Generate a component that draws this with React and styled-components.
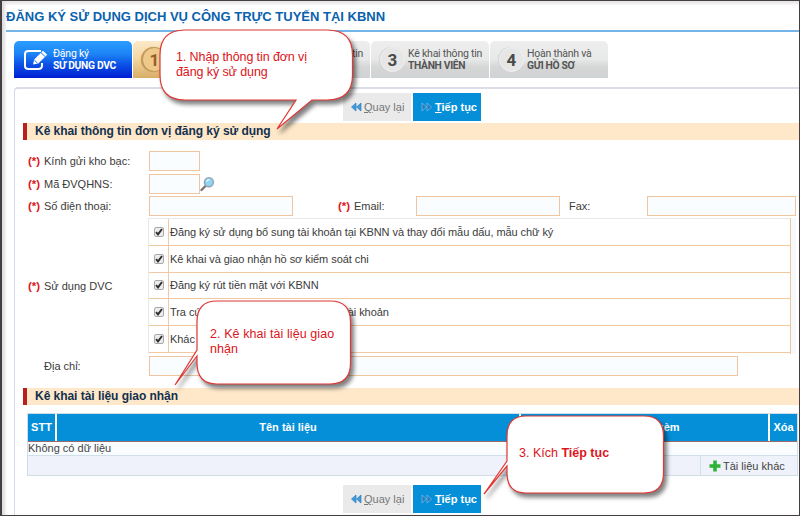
import React from 'react';
import styled, { createGlobalStyle } from 'styled-components';

const Global = createGlobalStyle`
  * { box-sizing: border-box; }
  body { margin: 0; background: #fff; font-family: "Liberation Sans", Arial, sans-serif; }
`;

const Frame = styled.div`
  position: relative;
  width: 800px;
  height: 516px;
  overflow: hidden;
  background: #fff;
  border: solid #453f42;
  border-width: 1px 1px 1px 2px;
  padding-left: 4px;
  box-shadow: inset 4px 0 3px -1px #dedede, inset 0 4px 3px -1px #e8e8e8;
`;
const Title = styled.h1`
  margin: 0;
  height: 31px;
  padding-top: 7px;
  border-bottom: 2px solid #74b4e6;
  color: #0a62ad;
  font-size: 13px;
  line-height: 17px;
  white-space: nowrap;
`;
const Tabs = styled.nav`
  display: flex;
  gap: 1px;
  padding: 9px 0 9px 8px;
  height: 55px;
`;
const tones = {
  active: ['#2b9dff 0%, #1c84f5 35%, #0b4fe6 65%, #001fd2 100%', '#fff'],
  warm: ['#fbe9c8 0%, #f4d8a2 45%, #d9ad66 100%', '#8a5a2c'],
  idle: ['#eeeeee 0%, #e7e8e8 50%, #d6d6d6 70%, #cfd3d4 100%', '#555'],
};
const Tab = styled.div`
  display: flex;
  align-items: center;
  width: 118px;
  height: 37px;
  padding-left: 9px;
  border-radius: 5px 5px 0 0;
  color: ${p => tones[p.$tone][1]};
  background: linear-gradient(${p => tones[p.$tone][0]});
`;
const StepNumber = styled.span`
  width: 25px;
  height: 25px;
  margin-right: 3px;
  border-radius: 50%;
  background: ${p => (p.$warm ? '#edc98c' : '#e6e6e6')};
  border: 1px solid ${p => (p.$warm ? '#c79d5c' : '#f1f1f1')};
  box-shadow: -1px 0 1px ${p => (p.$warm ? '#b98a48' : '#d2d2d2')};
  color: ${p => (p.$warm ? '#96602b' : '#4a4a4a')};
  font: 700 17px/24px Roboto, sans-serif;
  text-align: center;
`;
const TabText = styled.span`
  display: flex;
  flex-direction: column;
  margin-left: ${p => p.$ml || 0}px;
  font: 400 10.5px/11.5px Roboto, sans-serif;
  letter-spacing: -0.22px;
  white-space: nowrap;
  strong { font-weight: 700; font-size: 10.3px; letter-spacing: -0.33px; }
`;
const Panel = styled.main`
  margin-left: 8px;
  height: 440px;
  border: 1px solid #cfdcea;
  border-top: 2px solid #dadde8;
  border-right: 0;
  border-radius: 4px 0 0 0;
  padding-left: 8px;
`;
const Actions = styled.div`
  display: flex;
  gap: 2px;
  padding-left: 320px;
  height: 28px;
  margin-top: ${p => p.$mt}px;
`;
const Button = styled.button`
  display: flex;
  align-items: center;
  width: 68px;
  padding: 0 0 0 8px;
  gap: ${p => (p.$primary ? 3 : 2)}px;
  border: 0;
  font-family: inherit;
  font-size: 11px;
  font-weight: ${p => (p.$primary ? 700 : 400)};
  color: ${p => (p.$primary ? '#fff' : '#777')};
  background: ${p => (p.$primary ? '#058fd8' : '#eaeaea')};
  white-space: nowrap;
  svg { flex: none; }
`;
const Section = styled.h2`
  margin: ${p => p.$mt}px 0 0;
  height: 17px;
  padding-left: 8px;
  border-left: 4px solid #b8201f;
  background: #fee8c9;
  color: #12304f;
  font-size: 12px;
  line-height: 16px;
  letter-spacing: -0.04px;
  white-space: nowrap;
`;
const Form = styled.div`
  display: flex;
  flex-direction: column;
  padding: 11px 0 0 5px;
  color: #3b3b3b;
  font-size: 11px;
`;
const Row = styled.div`
  display: flex;
  align-items: center;
  height: ${p => p.$h || 20}px;
  margin-bottom: ${p => p.$mb}px;
`;
const Mark = styled.b`
  width: 16px;
  color: #e0151c;
  font-size: 11.5px;
`;
const Label = styled.label`
  width: ${p => p.$w}px;
  padding-bottom: 1px;
  white-space: nowrap;
`;
const Input = styled.input`
  width: ${p => p.$w}px;
  height: 20px;
  margin: 0 ${p => p.$mr || 0}px 0 0;
  padding: 0 3px;
  border: 1px solid #efc5a0;
  outline: 0;
  background: #fafdff;
`;
const Options = styled.div`
  width: 643px;
  height: 136px;
  border-top: 1px solid #e8e8e8;
  border-left: 1px solid #e8e8e8;
  border-right: 1px solid #efc59c;
  box-shadow: 5px 0 0 #f6f9fc;
`;
const Option = styled.div`
  display: flex;
  align-items: center;
  height: 26.8px;
  border-bottom: 1px solid #f0c8a2;
  white-space: nowrap;
  letter-spacing: -0.06px;
`;
const CheckCell = styled.span`
  display: flex;
  align-items: center;
  justify-content: center;
  width: 20px;
  height: 100%;
  margin-right: 1px;
  border-right: 1px solid #f0c8a2;
`;
const Check = styled.span`
  display: flex;
  width: 10px;
  height: 10px;
  border: 1px solid #a9a9a9;
  border-radius: 2px;
  background: #ececec;
`;
const Tail = styled.span`
  margin-left: ${p => p.$ml}px;
`;
const Table = styled.div`
  width: 771px;
  margin: 8px 0 0 4px;
  border: 1px solid #cfdfea;
  font-size: 11px;
  color: #444;
`;
const HeadRow = styled.div`
  display: grid;
  grid-template-columns: 27px 462px 1fr 27px;
  gap: 2px;
  height: 28px;
  background: #fff;
  border-bottom: 1px solid #9a6a6a;
`;
const HeadCell = styled.div`
  background: #058fd8;
  color: #fff;
  font-weight: 700;
  line-height: 27px;
  text-align: center;
  white-space: nowrap;
`;
const EmptyRow = styled.div`
  height: 14px;
  line-height: 13px;
  background: #f9fdff;
  border-bottom: 1px solid #cfe0ea;
`;
const FootRow = styled.div`
  display: flex;
  justify-content: flex-end;
  height: 19px;
  background: #eff2fa;
`;
const AddCell = styled.div`
  display: flex;
  align-items: center;
  gap: 2px;
  width: 97px;
  padding-left: 8px;
  border-left: 1px solid #cfe0ea;
  white-space: nowrap;
`;
const Callout = styled.aside`
  position: absolute;
  left: ${p => p.$x - 2}px;
  top: ${p => p.$y - 1}px;
  color: #dc1420;
  font-size: 12.5px;
  line-height: 14.5px;
  white-space: nowrap;
`;
const Bubble = styled.svg`
  display: block;
  overflow: visible;
  filter: drop-shadow(3px 4px 2px rgba(0, 0, 0, 0.5));
`;
const CalloutText = styled.div`
  position: absolute;
  left: ${p => p.$x}px;
  top: ${p => p.$y}px;
  letter-spacing: ${p => p.$ls || 0}px;
`;

function Arrows({ back, light }) {
  const c = light ? '#2f77b5' : '#3f9ddf';
  const e = light ? '#7fd0ff' : '#2170b4';
  return (
    <svg width="11" height="10" viewBox="0 0 11 10">
      <g transform={back ? undefined : 'translate(11 0) scale(-1 1)'} fill={c} stroke={e} strokeWidth=".6">
        <path d="M5 1v8L.5 5z" />
        <path d="M10 1v8L5.5 5z" />
      </g>
    </svg>
  );
}

function ButtonPair({ mt }) {
  return (
    <Actions $mt={mt}>
      <Button><Arrows back /><span><u>Q</u>uay lại</span></Button>
      <Button $primary><Arrows light /><span><u>T</u>iếp tục</span></Button>
    </Actions>
  );
}

function EditIcon() {
  return (
    <svg width="27" height="22" viewBox="0 0 27 22" fill="none">
      <path d="M18 2H5.500Q2 2 2 5v12q0 3 3.500 3H15q4 0 4-3.500V14" stroke="#fff" strokeWidth="2" />
      <path d="M10 15.500l1.200-5L20 1.800l4.200 4L15.300 14.500z" fill="#fff" />
      <path d="M18 3.600l4.200 4.100M11.300 11l3.300 3.200" stroke="#1672ee" strokeWidth="1" />
    </svg>
  );
}

function SearchIcon() {
  return (
    <svg width="15" height="15" viewBox="0 0 15 15">
      <path d="M1.500 13L6 8.500" stroke="#777" strokeWidth="2.400" strokeLinecap="round" />
      <circle cx="8.900" cy="5.300" r="4.500" fill="#8ed4f4" stroke="#96a5b4" strokeWidth="1.500" />
      <path d="M6.500 4.500q1-2 3-1.700" stroke="#e8faff" strokeWidth="1.500" fill="none" />
    </svg>
  );
}

function CheckBox() {
  return (
    <Check>
      <svg width="8" height="8" viewBox="0 0 8 8"><path d="M1 4.200l2 2.200L7 1" fill="none" stroke="#2e2e2e" strokeWidth="1.900" /></svg>
    </Check>
  );
}

function Step({ n, warm, children }) {
  return (
    <Tab $tone={warm ? 'warm' : 'idle'}>
      <StepNumber $warm={warm}>{n}</StepNumber>
      <TabText>{children}</TabText>
    </Tab>
  );
}

const services = [
  ['Đăng ký sử dụng bổ sung tài khoản tại KBNN và thay đổi mẫu dấu, mẫu chữ ký'],
  ['Kê khai và giao nhận hồ sơ kiểm soát chi'],
  ['Đăng ký rút tiền mặt với KBNN'],
  ['Tra cứu', 'tài khoản'],
  ['Khác'],
];

export default function App() {
  return (
    <>
      <Global />
      <Frame>
        <Title>ĐĂNG KÝ SỬ DỤNG DỊCH VỤ CÔNG TRỰC TUYẾN TẠI KBNN</Title>
        <Tabs>
          <Tab $tone="active">
            <EditIcon />
            <TabText $ml={3}><span>Đăng ký</span><strong>SỬ DỤNG DVC</strong></TabText>
          </Tab>
          <Step n="1" warm />
          <Step n="2">Kê khai thông tin<strong>ĐƠN VỊ</strong></Step>
          <Step n="3">Kê khai thông tin<strong>THÀNH VIÊN</strong></Step>
          <Step n="4">Hoàn thành và<strong>GỬI HỒ SƠ</strong></Step>
        </Tabs>
        <Panel>
          <ButtonPair mt={4} />
          <Section $mt={2}>Kê khai thông tin đơn vị đăng ký sử dụng</Section>
          <Form>
            <Row $mb={3}><Mark>(*)</Mark><Label $w={105}>Kính gửi kho bạc:</Label><Input $w={51} /></Row>
            <Row $mb={2}><Mark>(*)</Mark><Label $w={105}>Mã ĐVQHNS:</Label><Input $w={51} /><SearchIcon /></Row>
            <Row $mb={2}>
              <Mark>(*)</Mark><Label $w={105}>Số điện thoại:</Label><Input $w={144} $mr={45} />
              <Mark>(*)</Mark><Label $w={62}>Email:</Label><Input $w={144} $mr={9} />
              <Label $w={78}>Fax:</Label><Input $w={149} />
            </Row>
            <Row $h={136} $mb={2}>
              <Mark>(*)</Mark><Label $w={104}>Sử dụng DVC</Label>
              <Options>
                {services.map(([text, tail]) => (
                  <Option key={text}>
                    <CheckCell><CheckBox /></CheckCell>{text}{tail && <Tail $ml={137}>{tail}</Tail>}
                  </Option>
                ))}
              </Options>
            </Row>
            <Row $mb={0}><Mark /><Label $w={105}>Địa chỉ:</Label><Input $w={589} /></Row>
          </Form>
          <Section $mt={12}>Kê khai tài liệu giao nhận</Section>
          <Table>
            <HeadRow>
              <HeadCell>STT</HeadCell><HeadCell>Tên tài liệu</HeadCell>
              <HeadCell>File đính kèm</HeadCell><HeadCell>Xóa</HeadCell>
            </HeadRow>
            <EmptyRow>Không có dữ liệu</EmptyRow>
            <FootRow>
              <AddCell>
                <svg width="12" height="12" viewBox="0 0 12 12"><path d="M4.200.5h3.600v3.700h3.700v3.600H7.800v3.700H4.200V7.800H.5V4.200h3.700z" fill="#2eb135" /></svg>
                Tài liệu khác
              </AddCell>
            </FootRow>
          </Table>
          <ButtonPair mt={9} />
        </Panel>

        <Callout $x={159} $y={29}>
          <Bubble width="195" height="100" fill="#fff" stroke="#df3835" strokeWidth="1.200">
            <path d="M26 1H168Q193.500 1 193.500 26V46Q193.500 71 168 71H153L118 100L137 71H26Q1 71 1 46V26Q1 1 26 1Z" />
          </Bubble>
          <CalloutText $x={17} $y={21} $ls={-0.1}>1. Nhập thông tin đơn vị<br />đăng ký sử dụng</CalloutText>
        </Callout>
        <Callout $x={196} $y={300}>
          <Bubble width="156" height="86" fill="#fff" stroke="#df3835" strokeWidth="1.200">
            <path d="M21 1H134Q154.500 1 154.500 22V63Q154.500 84 134 84H21Q1 84 1 63V56L-21 85L1 50V22Q1 1 21 1Z" />
          </Bubble>
          <CalloutText $x={14} $y={27} $ls={0.08}>2. Kê khai tài liệu giao<br />nhận</CalloutText>
        </Callout>
        <Callout $x={506} $y={415}>
          <Bubble width="159" height="80" fill="#fff" stroke="#df3835" strokeWidth="1.200">
            <path d="M20 1H138Q157.500 1 157.500 21V58Q157.500 78 138 78H20Q1 78 1 58V51L-22 79L1 46V21Q1 1 20 1Z" />
          </Bubble>
          <CalloutText $x={13} $y={31}>3. Kích <b>Tiếp tục</b></CalloutText>
        </Callout>
      </Frame>
    </>
  );
}
